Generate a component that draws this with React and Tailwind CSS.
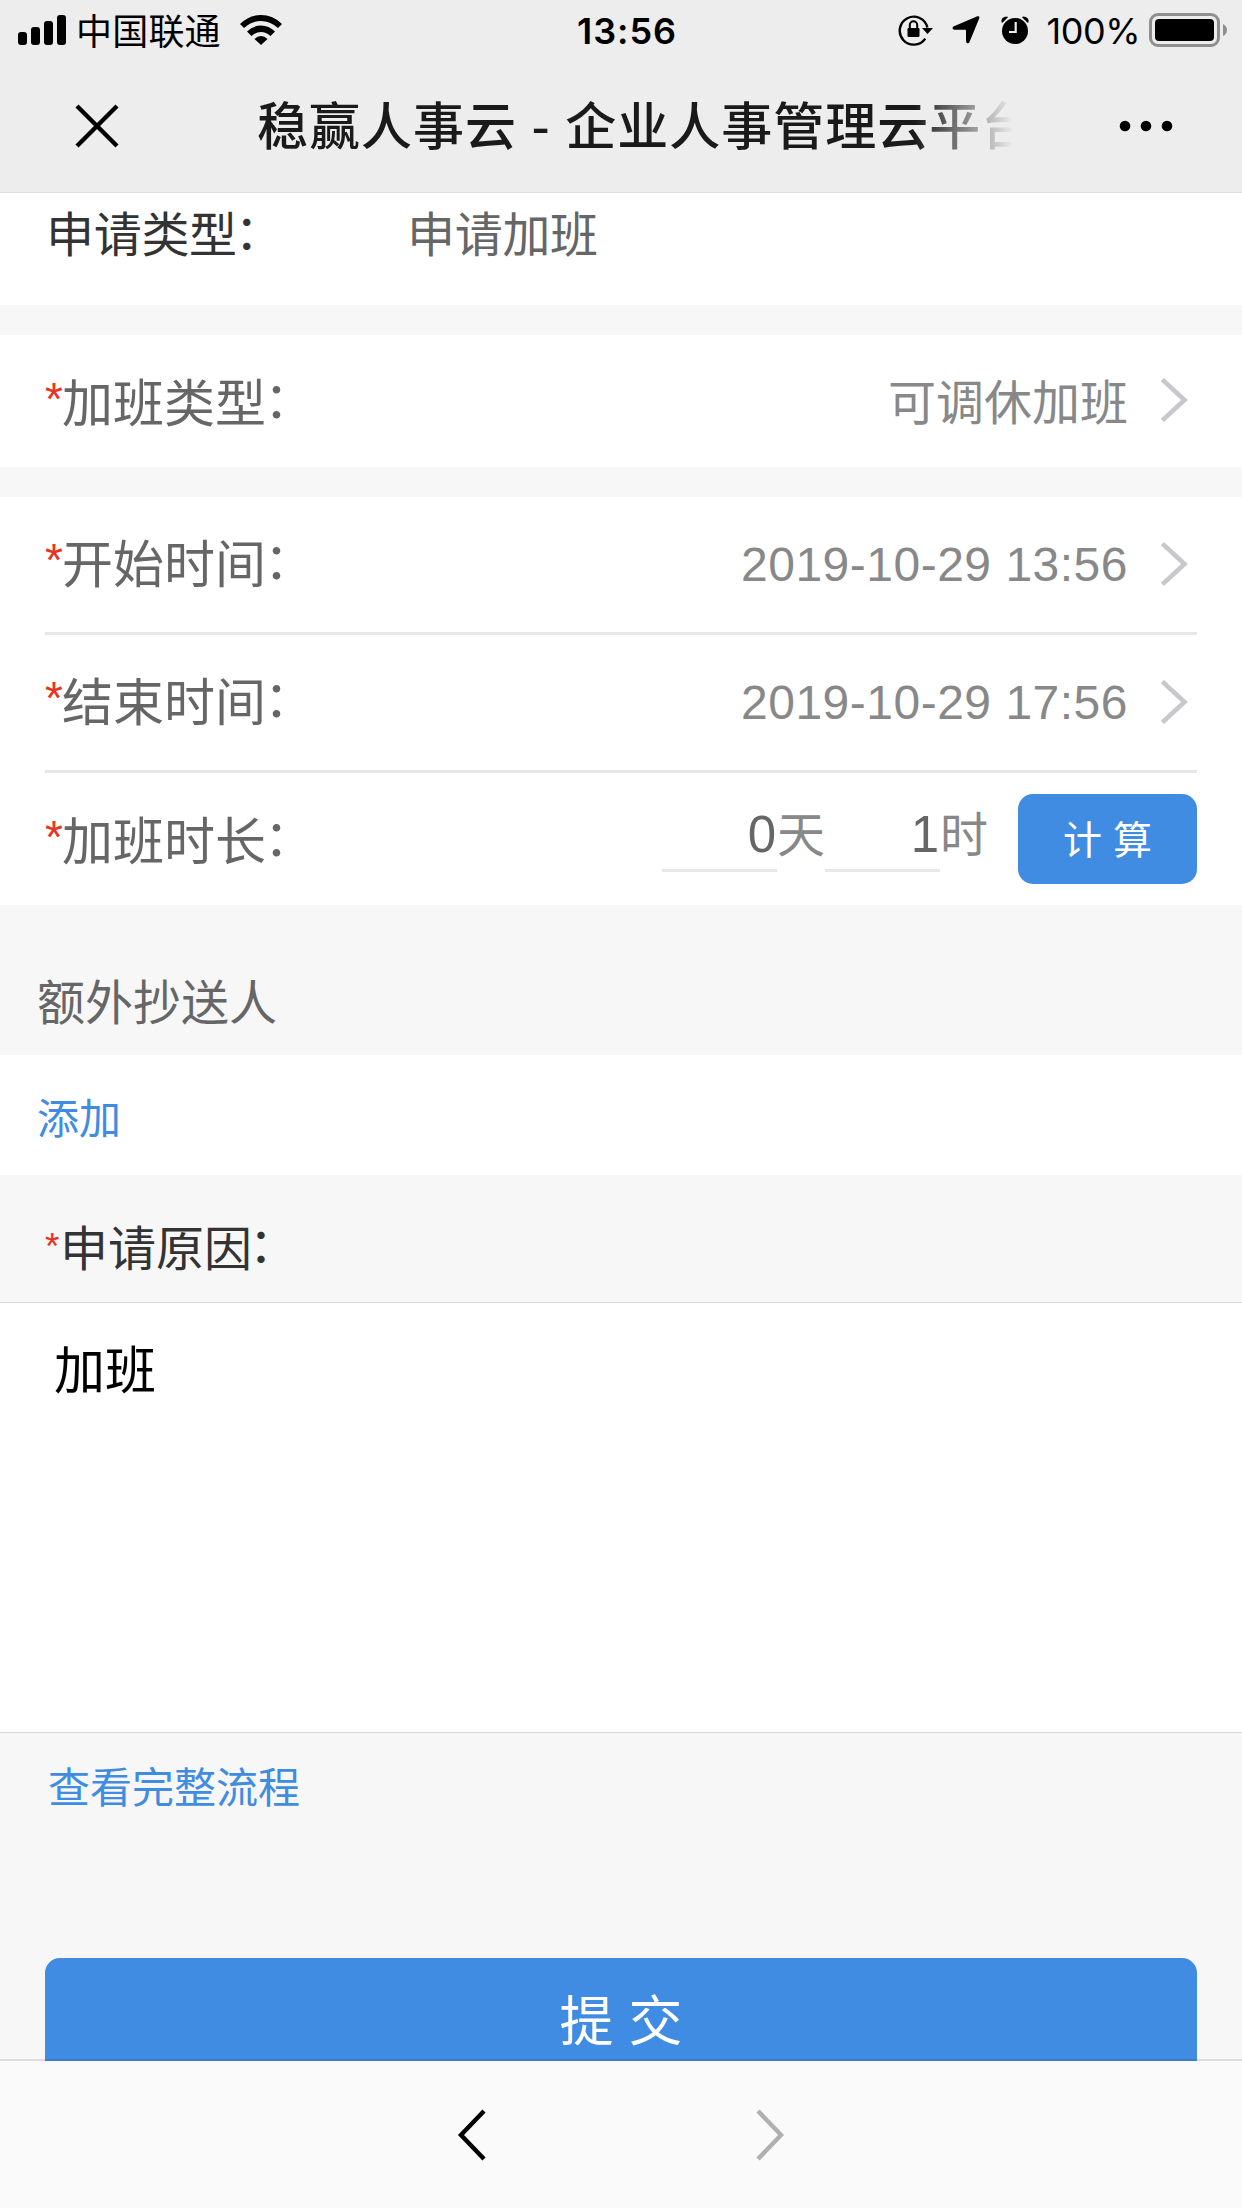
import React from 'react';

const Chevron = () => (
  <svg className="mb-[2px] ml-[32px] h-[46px] w-[29px] shrink-0" viewBox="0 0 29 46" fill="none" stroke="#c7c7cc" strokeWidth="4.6">
    <path d="M2.4 2.6 24.5 23 2.4 43.4" />
  </svg>
);

const Label = ({ children }) => (
  <div className="mb-[2px] flex items-center text-[51px] leading-[60px] text-[#666]">
    <span className="-mt-[3px] w-[17px] font-['Liberation_Sans',sans-serif] text-[46px] text-[#e93323]">*</span>
    <span>{children}</span>
    <span className="-mt-[8px] -ml-[2px] text-[50px]">：</span>
  </div>
);

const StatusBar = () => (
  <div className="flex h-[60px] items-center text-black">
    <div className="flex flex-1 items-center pl-[18px]">
      <svg className="h-[30px] w-[48px]" viewBox="0 0 48 30">
        <rect x="0" y="17" width="9" height="13" rx="3" />
        <rect x="13" y="12" width="9" height="18" rx="3" />
        <rect x="26" y="6" width="9" height="24" rx="3" />
        <rect x="39" y="0" width="9" height="30" rx="3" />
      </svg>
      <span className="mb-[3px] ml-[10px] text-[36px] leading-[54px] tracking-[0.2px]">中国联通</span>
      <svg className="ml-[19px] h-[30px] w-[42px]" viewBox="0 0 42 30">
        <path d="M0 9 Q9 0 21 0 T42 9 L38 13 Q30 6 21 6 T4 13 Z" />
        <path d="M7 16.500 Q13 10.500 21 10.500 T35 16.500 L30.500 21 Q26 17 21 17 T11.500 21 Z" />
        <path d="M14.500 24 Q17.500 21 21 21 T27.500 24 L21 30 Z" />
      </svg>
    </div>
    <span className="ml-[8px] mt-[2px] font-['Inter',sans-serif] text-[36px] font-semibold tracking-[0.9px]">13:56</span>
    <div className="flex flex-1 items-center justify-end pr-[14px]">
      <svg className="h-[32px] w-[36px]" viewBox="0 0 36 32">
        <path d="M27.300 24.600 A14 14 0 1 1 29.400 13.500" fill="none" stroke="#000" strokeWidth="2.4" />
        <path d="M24 14 H35 L29.500 20 Z" />
        <rect x="9.500" y="14" width="12" height="9" rx="1.200" />
        <path d="M11.800 14 V11 A3.700 3.700 0 0 1 19.200 11 V14" fill="none" stroke="#000" strokeWidth="2" />
      </svg>
      <svg className="ml-[18px] h-[28px] w-[28px]" viewBox="0 0 28 28">
        <path d="M25.400 0.300 Q28 -0.300 27.200 2.400 L17.500 26 Q16.500 28 15 27 Q14 26.500 14 25 V14.500 Q14 13.700 13.200 13.700 H2.500 Q0.500 13.500 0.500 12 Q0.500 10.800 2 10.200 Z" />
      </svg>
      <svg className="ml-[20px] h-[30px] w-[30px]" viewBox="0 0 30 30">
        <circle cx="15" cy="16" r="13" />
        <path d="M1.500 7.500 Q0.500 2 7 1.500 L8 2.300 L2.500 7.800 Z" />
        <path d="M28.500 7.500 Q29.500 2 23 1.500 L22 2.300 L27.500 7.800 Z" />
        <path d="M15.700 7 V17 H9" fill="none" stroke="#ededed" strokeWidth="2.2" />
      </svg>
      <span className="ml-[17px] mt-[2px] font-['Inter',sans-serif] text-[36px] tracking-[-0.5px]">100%</span>
      <svg className="ml-[9px] h-[34px] w-[79px]" viewBox="0 0 79 34">
        <rect x="1.500" y="1.500" width="68" height="31" rx="7.500" fill="none" stroke="#8f8f8f" strokeWidth="3" />
        <rect x="6" y="6" width="59" height="22" rx="4" />
        <path d="M74 11 Q78 13 78 17 T74 23 Z" fill="#8f8f8f" />
      </svg>
    </div>
  </div>
);

const TitleBar = () => (
  <div className="flex h-[132px] items-center">
    <svg className="mb-[1px] ml-[75px] h-[44px] w-[44px]" viewBox="0 0 44 44" stroke="#000" strokeWidth="4.4">
      <path d="M2 2 42 42 M42 2 2 42" />
    </svg>
    <h1 className="mb-[6px] ml-[138px] w-[756px] overflow-hidden whitespace-nowrap text-[51px] font-medium leading-[76px] tracking-[1px] text-[#1a1a1a] [word-spacing:2px] [mask-image:linear-gradient(to_right,#000_87%,transparent_100%)]">
      稳赢人事云 - 企业人事管理云平台
    </h1>
    <svg className="ml-[106px] h-[12px] w-[54px]" viewBox="0 0 54 12">
      <circle cx="6" cy="6" r="5.300" />
      <circle cx="27" cy="6" r="5.300" />
      <circle cx="48" cy="6" r="5.300" />
    </svg>
  </div>
);

const DateRow = ({ label, value }) => (
  <div className="mx-[45px] flex h-[138px] items-center border-b-[3px] border-[#e7e7e7] pr-[8px]">
    <div className="mb-[5px] flex-1"><Label>{label}</Label></div>
    <span className="font-['Liberation_Sans',sans-serif] text-[48px] tracking-[0.5px] text-[#888]">{value}</span>
    <Chevron />
  </div>
);

const NumberInput = ({ value, unit }) => (
  <div className="mt-[4px] flex">
    <span className="h-[62px] w-[115px] border-b-[3px] border-[#e7e7e7] pr-[1px] text-right font-['Liberation_Sans',sans-serif] text-[51px] leading-[50px] text-[#666]">{value}</span>
    <span className="-mt-[4px] w-[48px] text-[48px] leading-[50px] text-[#888]">{unit}</span>
  </div>
);

const App = () => {
  return (
    <div className="flex h-[2208px] w-[1242px] flex-col overflow-hidden bg-[#f7f7f7] font-['Noto_Sans_CJK_SC',sans-serif] font-normal">
      <header className="h-[193px] shrink-0 border-b border-[#dfdfdf] bg-[#ededed]">
        <StatusBar />
        <TitleBar />
      </header>

      <main className="flex h-[1868px] shrink-0 flex-col overflow-hidden">
        <div className="flex h-[112px] shrink-0 bg-white pl-[46px] pt-[8px] text-[48px] leading-[60px]">
          <div className="flex w-[361px] text-[#333]">
            <span className="tracking-[-0.3px]">申请类型</span>
            <span className="-ml-[2px] -mt-[3px]">：</span>
          </div>
          <span className="tracking-[-0.3px] text-[#666]">申请加班</span>
        </div>

        <div className="mt-[30px] flex h-[132px] shrink-0 items-center bg-white pl-[45px] pr-[53px]">
          <div className="flex-1"><Label>加班类型</Label></div>
          <span className="mb-[4px] text-[48px] leading-[60px] text-[#888]">可调休加班</span>
          <Chevron />
        </div>

        <div className="mt-[30px] h-[408px] shrink-0 bg-white">
          <DateRow label="开始时间" value="2019-10-29 13:56" />
          <DateRow label="结束时间" value="2019-10-29 17:56" />
          <div className="mx-[45px] flex h-[132px] items-center">
            <div className="flex-1"><Label>加班时长</Label></div>
            <NumberInput value="0" unit="天" />
            <NumberInput value="1" unit="时" />
            <button className="ml-[30px] h-[90px] w-[179px] rounded-[15px] bg-[#408ce2] pb-[4px] text-[39px] leading-[60px] text-white">
              计<span className="inline-block w-[11px]" />算
            </button>
          </div>
        </div>

        <div className="h-[150px] shrink-0 pl-[37px] pt-[61px] text-[48px] leading-[66px] text-[#666]">额外抄送人</div>
        <div className="h-[120px] shrink-0 bg-white pl-[37px] pt-[28px] text-[42px] leading-[66px] text-[#408ce2]">添加</div>

        <div className="flex h-[127px] shrink-0 pl-[45px] pt-[37px] text-[48px] leading-[66px] text-[#333]">
          <span className="mt-[2px] w-[15px] font-['Liberation_Sans',sans-serif] text-[37px] text-[#e93323]">*</span>
          <span>申请原因</span>
          <span className="-ml-[3px] -mt-[4px]">：</span>
        </div>
        <div className="h-[431px] shrink-0 border-y border-[#dadada] bg-white pl-[54px] pt-[31px] text-[51px] leading-[66px] text-black">
          加班
        </div>

        <a className="shrink-0 pl-[48px] pt-[19px] text-[42px] leading-[66px] text-[#408ce2]">查看完整流程</a>
        <button className="mx-[45px] mt-[140px] h-[141px] shrink-0 rounded-[15px] bg-[#408ce2] pb-[22px] text-[54px] leading-[80px] text-white">
          提<span className="inline-block w-[15px]" />交
        </button>
      </main>

      <footer className="relative -mt-[2px] flex h-[149px] shrink-0 border-t-2 border-black/10 bg-[#fafafa] bg-clip-padding pl-[457px] pt-[48px]">
        <svg className="h-[52px] w-[29px]" viewBox="0 0 29 52" fill="none" stroke="#000" strokeWidth="4.4">
          <path d="M27 2 4 26 27 50" />
        </svg>
        <svg className="ml-[270px] h-[52px] w-[29px]" viewBox="0 0 29 52" fill="none" stroke="#b0b0b0" strokeWidth="4.4">
          <path d="M2 2 25 26 2 50" />
        </svg>
      </footer>
    </div>
  );
};

export default App;
